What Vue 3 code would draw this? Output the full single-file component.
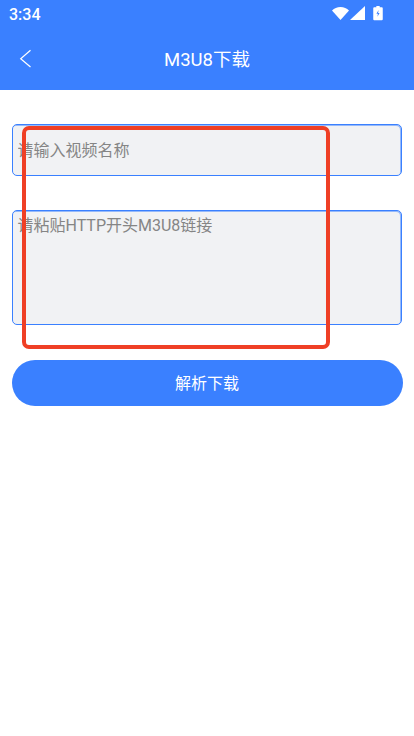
<script setup>
const batteryBolt = 'M13.2 8.5 10.6 13h1.8l-.6 3.6 2.6-4.6h-1.8z'
</script>

<template>
  <div class="page">
    <header class="header">
      <div class="status">
        <span class="time">3:34</span>
        <div class="status-icons">
          <svg class="wifi" width="17" height="14" viewBox="0 0 17 14">
            <path d="M0 4.6C2.2 2.4 5.2 1 8.5 1s6.3 1.400 8.500 3.600L8.500 14z" fill="#fff" />
          </svg>
          <svg class="signal" width="15" height="14" viewBox="0 0 15 14">
            <path d="M15 0v14H0z" fill="#fff" />
          </svg>
          <svg class="battery" width="10" height="16" viewBox="6 3 12 18">
            <path fill-rule="evenodd" d="M10 3.500h4v1.500h2.500a1.200 1.200 0 0 1 1.200 1.200v13.300a1.200 1.200 0 0 1-1.200 1.200h-9a1.200 1.200 0 0 1-1.200-1.200V6.200a1.200 1.200 0 0 1 1.200-1.200H10z" fill="#fff" />
            <path :d="batteryBolt" fill="#3a80ff" transform="translate(-.5 0)" />
          </svg>
        </div>
      </div>
      <div class="nav">
        <svg class="back" width="13" height="20" viewBox="0 0 13 20">
          <path d="M11.500 1.200 1.700 9.700l9.800 8.300" fill="none" stroke="#fff" stroke-width="1.200" />
        </svg>
        <h1 class="title">M3U8下载</h1>
      </div>
    </header>

    <main class="form">
      <input class="field name" type="text" placeholder="请输入视频名称" />
      <textarea class="field link" placeholder="请粘贴HTTP开头M3U8链接"></textarea>
      <button class="submit" type="button">解析下载</button>
      <div class="annotation"></div>
    </main>
  </div>
</template>

<style>
html,
body {
  margin: 0;
  background: #fff;
}
</style>

<style scoped>
.page {
  width: 414px;
  height: 736px;
  overflow: hidden;
  background: #fff;
  font-family: Roboto, "Noto Sans CJK SC", sans-serif;
}

.header {
  height: 90px;
  background: #3a80ff;
  color: #fff;
  box-sizing: border-box;
}

.status {
  height: 30px;
  padding: 0 31px 0 9px;
  display: flex;
  align-items: center;
  justify-content: space-between;
}

.time {
  font-size: 16px;
  font-weight: 500;
  line-height: 30px;
}

.status-icons {
  display: flex;
  align-items: center;
  margin-top: -4px;
}

.signal {
  margin-left: 1px;
}

.battery {
  margin-left: 8px;
}

.nav {
  position: relative;
  height: 58px;
  display: flex;
  align-items: center;
  justify-content: center;
}

.back {
  position: absolute;
  left: 19px;
  top: 19px;
}

.title {
  margin: 0 0 2px;
  font-size: 18.5px;
  font-weight: 400;
}

.form {
  position: relative;
  padding: 34px 12px 0;
  display: flex;
  flex-direction: column;
}

.field {
  display: block;
  width: 390px;
  box-sizing: border-box;
  border: 1px solid #3a80ff;
  border-radius: 5px;
  background: #f1f2f4;
  box-shadow: inset -1px 1px 0 rgba(58, 128, 255, 0.5);
  padding: 0 4.5px;
  font-family: Roboto, "Noto Sans CJK SC", sans-serif;
  font-size: 16px;
  color: #333;
  outline: none;
  margin: 0;
}

.field::placeholder {
  color: #858585;
  opacity: 1;
}

.name {
  height: 52px;
  padding-top: 1px;
}

.link {
  height: 115px;
  margin-top: 34px;
  padding-top: 1px;
  resize: none;
}

.submit {
  width: 391px;
  height: 46px;
  margin: 35px 0 0 -0.5px;
  border: 0;
  border-radius: 23px;
  background: #3a80ff;
  color: #fff;
  font-family: Roboto, "Noto Sans CJK SC", sans-serif;
  font-size: 16px;
  padding: 0 0 2px;
}

.annotation {
  position: absolute;
  left: 22px;
  top: 36px;
  width: 308px;
  height: 222.5px;
  box-sizing: border-box;
  border: 4px solid #ef3f25;
  border-radius: 7px;
  pointer-events: none;
}
</style>
